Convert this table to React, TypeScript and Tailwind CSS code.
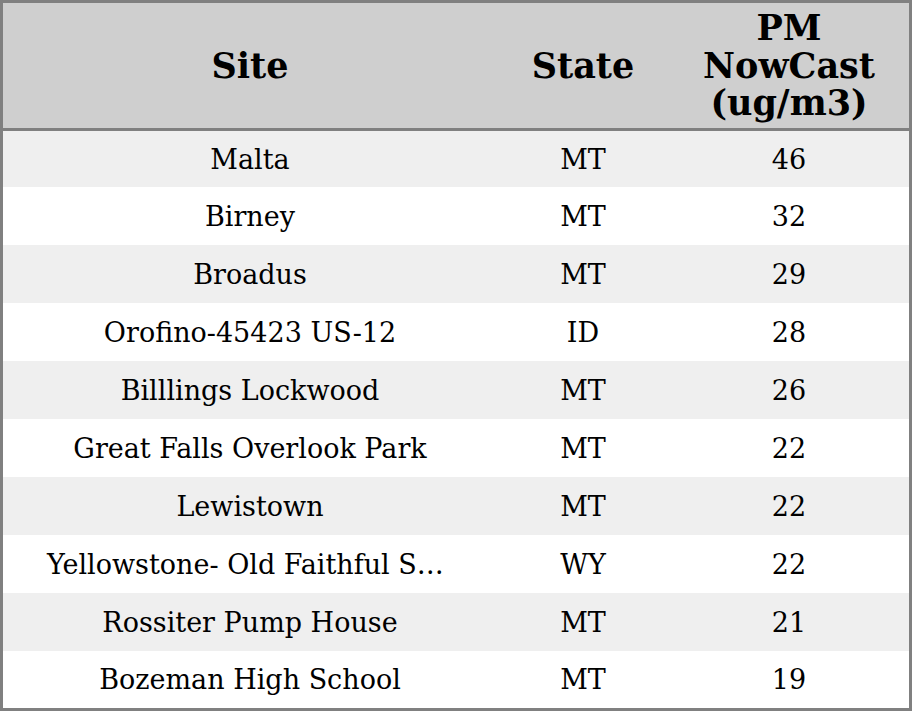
const rows: [string, string, number][] = [
  ['Malta', 'MT', 46],
  ['Birney', 'MT', 32],
  ['Broadus', 'MT', 29],
  ['Orofino-45423 US-12', 'ID', 28],
  ['Billlings Lockwood', 'MT', 26],
  ['Great Falls Overlook Park', 'MT', 22],
  ['Lewistown', 'MT', 22],
  ['Yellowstone- Old Faithful Snow Lodge', 'WY', 22],
  ['Rossiter Pump House', 'MT', 21],
  ['Bozeman High School', 'MT', 19],
]

export default function App() {
  return (
    <div className="flex h-[711px] w-[912px] flex-col border-[3px] border-[#808080] bg-white font-['DejaVu_Serif',serif] text-black">
      <div className="flex h-[128px] shrink-0 items-center border-b-[3px] border-[#808080] bg-[#cfcfcf] text-[35px] leading-[37.5px] font-bold">
        <div className="w-[494px] text-center">Site</div>
        <div className="w-[172px] text-center">State</div>
        <div className="flex-1 text-center">
          PM
          <br />
          NowCast
          <br />
          (ug/m3)
        </div>
      </div>
      {rows.map(([site, state, value], i) => (
        <div
          key={site}
          className={`flex shrink-0 items-center pt-[2px] text-[27px] ${
            i === 0 ? 'h-[56px]' : i === rows.length - 1 ? 'h-[57px]' : 'h-[58px]'
          } ${i % 2 === 0 ? 'bg-[#efefef]' : 'bg-white'}`}
        >
          <div className="w-[494px] truncate px-[44px] text-center">{site}</div>
          <div className="w-[172px] text-center">{state}</div>
          <div className="flex-1 text-center">{value}</div>
        </div>
      ))}
    </div>
  )
}
